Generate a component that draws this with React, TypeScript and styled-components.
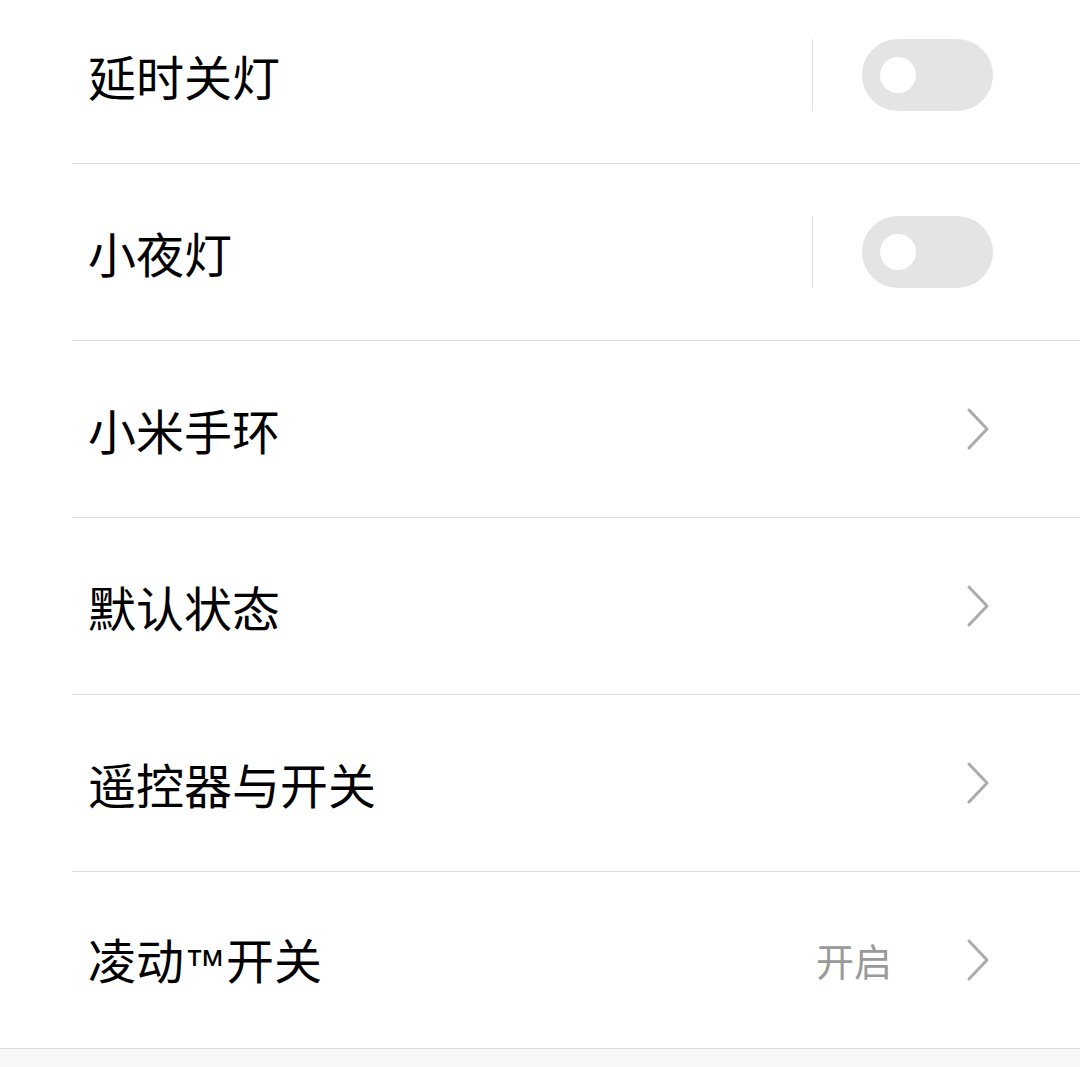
import React from 'react';
import styled, { createGlobalStyle } from 'styled-components';

const GlobalStyle = createGlobalStyle`
  html, body {
    margin: 0;
    padding: 0;
    background: #f7f7f7;
    font-family: "Noto Sans CJK SC", "Noto Sans", sans-serif;
  }
`;

const Page = styled.div`
  min-height: 1067px;
  overflow: hidden;
  background: #f7f7f7;
`;

const List = styled.ul`
  list-style: none;
  margin: -13px 0 0;
  padding: 0 0 0 72px;
  background: #ffffff;
  border-bottom: 1px solid #dcdcdc;
`;

const Row = styled.li<{ $last?: boolean }>`
  height: 176px;
  display: flex;
  align-items: center;
  padding: 0 87px 0 16px;
  border-bottom: ${({ $last }) => ($last ? 'none' : '1px solid #dcdcdc')};
`;

const Label = styled.span`
  flex: 1;
  font-size: 48px;
  color: #000000;
  line-height: 1;
`;

const Mark = styled.span`
  font-family: "Liberation Sans", Arial, sans-serif;
  font-size: 42px;
`;

const Value = styled.span`
  font-size: 38px;
  color: #9a9a9a;
  margin-right: 74px;
  line-height: 1;
`;

const Separator = styled.div`
  width: 1px;
  height: 72px;
  background: #e2e2e2;
  margin-right: 49px;
`;

const Switch = styled.div<{ $on?: boolean }>`
  width: 131px;
  height: 72px;
  border-radius: 36px;
  background: ${({ $on }) => ($on ? '#3fb7f0' : '#e4e4e4')};
  display: flex;
  align-items: center;
  padding: 0 18px;
  box-sizing: border-box;
  justify-content: ${({ $on }) => ($on ? 'flex-end' : 'flex-start')};
`;

const Knob = styled.div`
  width: 36px;
  height: 36px;
  border-radius: 50%;
  background: #ffffff;
`;

const ChevronBox = styled.span`
  display: flex;
  margin-right: 3px;
`;

const Chevron = () => (
  <ChevronBox>
    <svg width="24" height="44" viewBox="0 0 24 44">
      <path d="M3 3 L21 22 L3 41" fill="none" stroke="#ababab" strokeWidth="3" strokeLinecap="round" strokeLinejoin="round" />
    </svg>
  </ChevronBox>
);

type Item = { label: React.ReactNode; key: string; kind: 'switch' | 'link'; value?: string };

const items: Item[] = [
  { key: 'a', label: '延时关灯', kind: 'switch' },
  { key: 'b', label: '小夜灯', kind: 'switch' },
  { key: 'c', label: '小米手环', kind: 'link' },
  { key: 'd', label: '默认状态', kind: 'link' },
  { key: 'e', label: '遥控器与开关', kind: 'link' },
  {
    key: 'f',
    label: (
      <>
        凌动<Mark>™</Mark>开关
      </>
    ),
    kind: 'link',
    value: '开启',
  },
];

const App: React.FC = () => (
  <Page>
    <GlobalStyle />
    <List>
      {items.map((item, i) => (
        <Row key={item.key} $last={i === items.length - 1}>
          <Label>{item.label}</Label>
          {item.kind === 'switch' ? (
            <>
              <Separator />
              <Switch>
                <Knob />
              </Switch>
            </>
          ) : (
            <>
              {item.value && <Value>{item.value}</Value>}
              <Chevron />
            </>
          )}
        </Row>
      ))}
    </List>
  </Page>
);

export default App;
